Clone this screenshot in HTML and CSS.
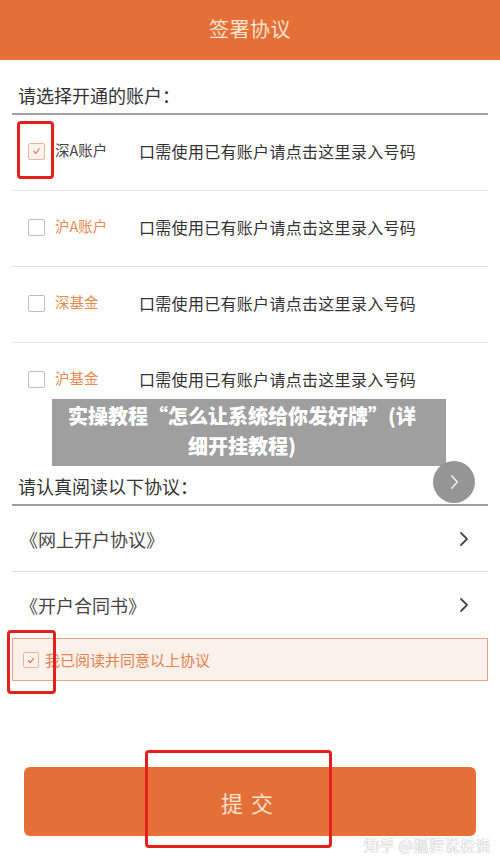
FILE: index.html
```html
<!DOCTYPE html>
<html lang="zh-CN">
<head>
<meta charset="utf-8">
<title>签署协议</title>
<link rel="stylesheet" href="styles.css">
</head>
<body>
<div class="page">
  <header class="topbar">签署协议</header>
  <div class="content">
    <h2 class="section-title">请选择开通的账户：</h2>
    <ul class="accounts">
      <li class="acct">
        <span class="box checked"><svg viewBox="0 0 16 16" width="16" height="16"><path d="M5 8.3 L7.2 10.5 L11 5.6" fill="none" stroke="#e0844f" stroke-width="1.3" stroke-linecap="round" stroke-linejoin="round"/></svg></span>
        <span class="acct-name dark">深A账户</span>
        <span class="acct-desc">口需使用已有账户请点击这里录入号码</span>
      </li>
      <li class="acct">
        <span class="box"></span>
        <span class="acct-name">沪A账户</span>
        <span class="acct-desc">口需使用已有账户请点击这里录入号码</span>
      </li>
      <li class="acct">
        <span class="box"></span>
        <span class="acct-name">深基金</span>
        <span class="acct-desc">口需使用已有账户请点击这里录入号码</span>
      </li>
      <li class="acct last">
        <span class="box"></span>
        <span class="acct-name">沪基金</span>
        <span class="acct-desc">口需使用已有账户请点击这里录入号码</span>
      </li>
    </ul>
    <h2 class="section-title second">请认真阅读以下协议：</h2>
    <ul class="docs">
      <li class="doc"><span>《网上开户协议》</span><svg class="chev" viewBox="0 0 10 16" width="10" height="16"><path d="M2 2 L8 8 L2 14" fill="none" stroke="#4a4a4a" stroke-width="1.8" stroke-linecap="round" stroke-linejoin="round"/></svg></li>
      <li class="doc last"><span>《开户合同书》</span><svg class="chev" viewBox="0 0 10 16" width="10" height="16"><path d="M2 2 L8 8 L2 14" fill="none" stroke="#4a4a4a" stroke-width="1.8" stroke-linecap="round" stroke-linejoin="round"/></svg></li>
    </ul>
    <div class="agree">
      <span class="box checked agree-box"><svg viewBox="0 0 16 16" width="15" height="15"><path d="M5 8.3 L7.2 10.5 L11 5.6" fill="none" stroke="#d9743d" stroke-width="1.4" stroke-linecap="round" stroke-linejoin="round"/></svg></span>
      <span class="agree-text">我已阅读并同意以上协议</span>
    </div>
    <div class="btn-wrap"><button class="submit">提交</button></div>
  </div>

  <div class="caption">实操教程“怎么让系统给你发好牌”(详<br>细开挂教程)</div>
  <div class="next-circle"><svg viewBox="0 0 12 20" width="11" height="18"><path d="M3 3 L9 10 L3 17" fill="none" stroke="#f2f2f2" stroke-width="1.6" stroke-linecap="round" stroke-linejoin="round"/></svg></div>
  <div class="mark mark-1"></div>
  <div class="mark mark-2"></div>
  <div class="mark mark-3"></div>
  <div class="watermark">知乎 @狐狸说投资</div>
</div>
</body>
</html>
```
FILE: styles.css
```css
* { box-sizing: border-box; }
html, body { margin: 0; padding: 0; background: #fff; }
body {
  font-family: "Noto Sans CJK SC", "Noto Sans", sans-serif;
  color: #333;
}
.page {
  position: relative;
  width: 500px;
  height: 866px;
  overflow: hidden;
  background: #fff;
}
.topbar {
  height: 60px;
  background: #e46f37;
  color: #fde3d0;
  font-size: 20px;
  line-height: 58px;
  text-align: center;
  letter-spacing: 0.5px;
}
.content {
  margin: 0 12px;
}
.section-title {
  margin: 0;
  font-weight: normal;
  font-size: 18px;
  line-height: 26px;
  padding: 22px 6px 5px;
  color: #333;
  border-bottom: 2px solid #a0a0a0;
}
.section-title.second {
  margin-top: 32px;
}
ul { list-style: none; margin: 0; padding: 0; }
.acct {
  height: 76px;
  display: flex;
  align-items: center;
  padding-left: 16px;
  padding-bottom: 4px;
  border-bottom: 1px solid #e2e2e2;
}
.acct.last { border-bottom: none; }
.box {
  width: 17px;
  height: 17px;
  border: 1.5px solid #bdbdbd;
  border-radius: 2px;
  background: #fff;
  display: flex;
  align-items: center;
  justify-content: center;
  flex: none;
  margin-top: 1px;
}
.box.checked {
  border-color: #e9b695;
  background: #fdf3ec;
}
.acct-name {
  width: 94px;
  padding-left: 10px;
  font-size: 14.5px;
  color: #e8894f;
  flex: none;
  margin-top: -3px;
}
.acct-name.dark { color: #444; }
.acct-desc {
  font-size: 16px;
  letter-spacing: 0.3px;
  color: #333;
}
.doc {
  height: 66px;
  display: flex;
  align-items: center;
  justify-content: space-between;
  padding: 0 19px 0 8px;
  font-size: 18px;
  color: #444;
  border-bottom: 1px solid #dedede;
}
.doc.last { border-bottom: none; }
.agree {
  height: 43px;
  display: flex;
  align-items: center;
  padding-left: 10px;
  background: #fcf0ea;
  border: 1px solid #e1a583;
}
.agree-box {
  width: 16px;
  height: 16px;
  border-color: #d98c5f;
}
.agree-text {
  padding-left: 6px;
  font-size: 15px;
  color: #e0834c;
}
.btn-wrap {
  padding: 86px 12px 0;
}
.submit {
  display: block;
  width: 100%;
  height: 69px;
  border: none;
  border-radius: 6px;
  background: #e46f37;
  color: #fde3d0;
  font-family: "Noto Sans CJK SC", "Noto Sans", sans-serif;
  font-size: 22px;
  letter-spacing: 8px;
  padding-left: 8px;
}
.caption {
  position: absolute;
  left: 52px;
  top: 399px;
  width: 394px;
  height: 67px;
  padding: 2px 14px 0 0;
  background: #9f9f9f;
  color: #fff;
  font-weight: 900;
  font-size: 20px;
  line-height: 30px;
  text-align: center;
}
.next-circle {
  position: absolute;
  left: 433px;
  top: 461px;
  width: 42px;
  height: 42px;
  border-radius: 50%;
  background: #959595;
  display: flex;
  align-items: center;
  justify-content: center;
}
.mark {
  position: absolute;
  border: 3px solid #e3201c;
  border-radius: 4px;
}
.mark-1 { left: 17px; top: 121px; width: 37px; height: 58px; }
.mark-2 { left: 7px; top: 630px; width: 49px; height: 64px; }
.mark-3 { left: 145px; top: 750px; width: 187px; height: 98px; }
.watermark {
  position: absolute;
  left: 364px;
  top: 834px;
  font-size: 15px;
  line-height: 22px;
  color: #fff;
  text-shadow: 0 0 1px #b0b0b0, 0 0 1px #b0b0b0;
  letter-spacing: 0.5px;
}
```
